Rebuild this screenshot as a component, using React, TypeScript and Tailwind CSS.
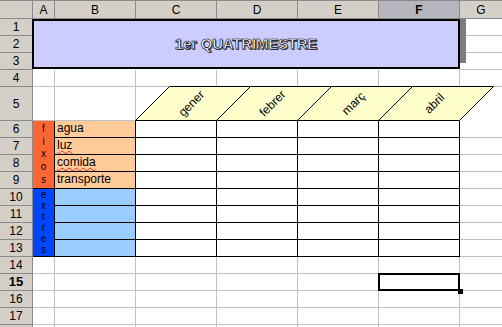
import React from "react";

const headers = ["A", "B", "C", "D", "E", "F", "G"];
const months = ["gener", "febrer", "març", "abril"];

const rowHead =
  "bg-[#d4d0c8] border-r border-b border-[#8a8a8a] flex items-center justify-center text-[12px] text-black";
const gridCell = "bg-white border-r border-b border-[#c0c0c0]";
const tableCell = "bg-white border-r border-b border-black";

function RowHead({ n, active }: { n?: number; active?: boolean }) {
  return (
    <div className={active ? rowHead + " bg-[#b6b5bd] font-bold text-[13px]" : rowHead}>
      {n}
    </div>
  );
}

function Blank() {
  return <div className={gridCell}></div>;
}

function Stack({ letters }: { letters: string }) {
  return (
    <div className="h-full flex flex-col items-center justify-evenly text-[10px] leading-none text-black">
      {letters.split("").map((l, i) => (
        <span key={i}>{l}</span>
      ))}
    </div>
  );
}

function Diagonals() {
  return (
    <svg width="367" height="34" className="overflow-visible block">
      {months.map((m, i) => {
        const x = 81 * i - 0.5;
        const cx = 81 * i + 56;
        const cy = 17;
        return (
          <g key={m}>
            <polygon
              points={`${x},33.5 ${x + 81},33.5 ${x + 115},-0.5 ${x + 34},-0.5`}
              fill="#ffffcc"
              stroke="#000"
              strokeWidth="1"
            />
            <text
              x={cx}
              y={cy}
              transform={`rotate(-45 ${cx} ${cy})`}
              textAnchor="middle"
              dominantBaseline="middle"
              fontSize="12"
              fontFamily="'Liberation Sans', Arial, sans-serif"
              fill="#000"
            >
              {m}
            </text>
          </g>
        );
      })}
    </svg>
  );
}

export default function App() {
  const fixos = ["agua", "luz", "comida", "transporte"];

  return (
    <div className="w-[502px] h-[327px] overflow-hidden bg-white font-['Liberation_Sans',Arial,sans-serif]">
      <div className="grid grid-cols-[33px_22px_81px_81px_81px_81px_81px_43px] grid-rows-[19px_17px_17px_17px_17px_34px_17px_17px_17px_17px_17px_17px_17px_17px_17px_17px_17px_17px_17px]">
        {/* column headers */}
        <div className="relative z-10 bg-[#d4d0c8] border-t border-r border-b border-[#8a8a8a]"></div>
        {headers.map((h) => (
          <div
            key={h}
            className={
              h === "F"
                ? "relative z-10 bg-[#b6b5bd] border-t border-r border-b border-[#8a8a8a] flex items-center justify-center text-[12px] font-bold"
                : "relative z-10 bg-[#d4d0c8] border-t border-r border-b border-[#8a8a8a] flex items-center justify-center text-[12px]"
            }
          >
            {h}
          </div>
        ))}

        {/* rows 1-3 title */}
        <RowHead n={1} />
        <div className="relative z-[5] col-span-6 row-span-3 bg-[#ccccff] border-2 border-black -ml-px mb-px flex items-center justify-center shadow-[6px_-6px_0_#7d7d7d]">
          <span className="text-[15px] font-bold tracking-[-0.2px] text-[#f6f6ff] [-webkit-text-stroke:0.6px_#000] [text-shadow:1px_1px_0_#3c3c50]">
            1er QUATRIMESTRE
          </span>
        </div>
        <Blank />
        <RowHead n={2} />
        <Blank />
        <RowHead n={3} />
        <Blank />

        {/* row 4 */}
        <RowHead n={4} />
        {headers.map((h) => (
          <Blank key={h} />
        ))}

        {/* row 5 */}
        <RowHead n={5} />
        <Blank />
        <Blank />
        <div className="relative z-[5] col-span-5">
          <Diagonals />
        </div>

        {/* rows 6-9 fixos */}
        {fixos.map((f, i) => (
          <React.Fragment key={f}>
            <RowHead n={6 + i} />
            {i === 0 && (
              <div className="row-span-4 bg-[#ff6633] border-r border-b border-black">
                <Stack letters="fixos" />
              </div>
            )}
            <div className="relative z-[1] bg-[#ffcc99] border-r border-b border-black flex items-start pt-px pl-[2px] text-[12px] leading-[13px] text-black">
              {f === "luz" || f === "comida" ? (
                <span className="underline decoration-wavy decoration-[#e02020] decoration-1 underline-offset-[1px]">
                  {f}
                </span>
              ) : (
                <span>{f}</span>
              )}
            </div>
            <div className={tableCell}></div>
            <div className={tableCell}></div>
            <div className={tableCell}></div>
            <div className={tableCell}></div>
            <Blank />
          </React.Fragment>
        ))}

        {/* rows 10-13 extres */}
        {[10, 11, 12, 13].map((n, i) => (
          <React.Fragment key={n}>
            <RowHead n={n} />
            {i === 0 && (
              <div className="row-span-4 bg-[#0047ff] border-r border-b border-black">
                <Stack letters="extres" />
              </div>
            )}
            <div className="bg-[#99ccff] border-r border-b border-black"></div>
            <div className={tableCell}></div>
            <div className={tableCell}></div>
            <div className={tableCell}></div>
            <div className={tableCell}></div>
            <Blank />
          </React.Fragment>
        ))}

        {/* rows 14-18 */}
        {[14, 15, 16, 17, 18].map((n) => (
          <React.Fragment key={n}>
            <RowHead n={n === 18 ? undefined : n} active={n === 15} />
            <Blank />
            <Blank />
            <Blank />
            <Blank />
            <Blank />
            {n === 15 ? (
              <div className={gridCell + " relative z-[5]"}>
                <div className="absolute -left-px -top-px -right-px -bottom-px border-2 border-black"></div>
                <div className="absolute -right-[4px] -bottom-[4px] w-[5px] h-[5px] bg-black"></div>
              </div>
            ) : (
              <Blank />
            )}
            <Blank />
          </React.Fragment>
        ))}
      </div>
    </div>
  );
}
